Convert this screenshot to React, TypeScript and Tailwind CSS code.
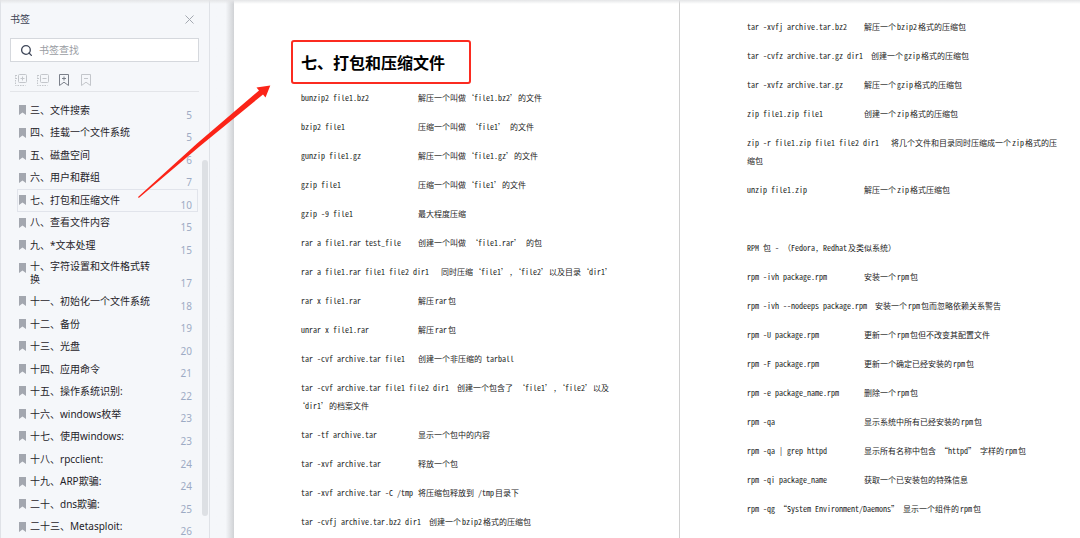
import { Search, X } from "lucide-react";

type Bookmark = { title: string; page: number; active?: boolean };

const bookmarks: Bookmark[] = [
  { title: "三、文件搜索", page: 5 },
  { title: "四、挂载一个文件系统", page: 5 },
  { title: "五、磁盘空间", page: 6 },
  { title: "六、用户和群组", page: 7 },
  { title: "七、打包和压缩文件", page: 10, active: true },
  { title: "八、查看文件内容", page: 15 },
  { title: "九、*文本处理", page: 15 },
  { title: "十、字符设置和文件格式转换", page: 17 },
  { title: "十一、初始化一个文件系统", page: 18 },
  { title: "十二、备份", page: 19 },
  { title: "十三、光盘", page: 20 },
  { title: "十四、应用命令", page: 21 },
  { title: "十五、操作系统识别:", page: 22 },
  { title: "十六、windows枚举", page: 23 },
  { title: "十七、使用windows:", page: 23 },
  { title: "十八、rpcclient:", page: 24 },
  { title: "十九、ARP欺骗:", page: 24 },
  { title: "二十、dns欺骗:", page: 25 },
  { title: "二十三、Metasploit:", page: 26 },
];

// [command, description]
const leftPage: [string, string][] = [
  ["bunzip2 file1.bz2", "解压一个叫做‘file1.bz2’的文件"],
  ["bzip2 file1", "压缩一个叫做 ‘file1’ 的文件"],
  ["gunzip file1.gz", "解压一个叫做‘file1.gz’的文件"],
  ["gzip file1", "压缩一个叫做‘file1’的文件"],
  ["gzip -9 file1", "最大程度压缩"],
  ["rar a file1.rar test_file", "创建一个叫做 ‘file1.rar’ 的包"],
  ["rar a file1.rar file1 file2 dir1   ", "同时压缩‘file1’,‘file2’以及目录‘dir1’"],
  ["rar x file1.rar", "解压rar包"],
  ["unrar x file1.rar", "解压rar包"],
  ["tar -cvf archive.tar file1", "创建一个非压缩的 tarball"],
  ["tar -cvf archive.tar file1 file2 dir1  ", "创建一个包含了 ‘file1’,‘file2’以及\n‘dir1’的档案文件"],
  ["tar -tf archive.tar", "显示一个包中的内容"],
  ["tar -xvf archive.tar", "释放一个包"],
  ["tar -xvf archive.tar -C /tmp", "将压缩包释放到 /tmp目录下"],
  ["tar -cvfj archive.tar.bz2 dir1  ", "创建一个bzip2格式的压缩包"],
];

const rightPage: [string, string][] = [
  ["tar -xvfj archive.tar.bz2", "解压一个bzip2格式的压缩包"],
  ["tar -cvfz archive.tar.gz dir1  ", "创建一个gzip格式的压缩包"],
  ["tar -xvfz archive.tar.gz", "解压一个gzip格式的压缩包"],
  ["zip file1.zip file1", "创建一个zip格式的压缩包"],
  ["zip -r file1.zip file1 file2 dir1   ", "将几个文件和目录同时压缩成一个zip格式的压\n缩包"],
  ["unzip file1.zip", "解压一个zip格式压缩包"],
  ["", ""],
  ["RPM 包 - （Fedora, Redhat及类似系统）", ""],
  ["rpm -ivh package.rpm", "安装一个rpm包"],
  ["rpm -ivh --nodeeps package.rpm  ", "安装一个rpm包而忽略依赖关系警告"],
  ["rpm -U package.rpm", "更新一个rpm包但不改变其配置文件"],
  ["rpm -F package.rpm", "更新一个确定已经安装的rpm包"],
  ["rpm -e package_name.rpm", "删除一个rpm包"],
  ["rpm -qa", "显示系统中所有已经安装的rpm包"],
  ["rpm -qa | grep httpd", "显示所有名称中包含 “httpd” 字样的rpm包"],
  ["rpm -qi package_name", "获取一个已安装包的特殊信息"],
  ["rpm -qg “System Environment/Daemons” ", "显示一个组件的rpm包"],
];

const Commands = ({ rows }: { rows: [string, string][] }) => (
  <div className="flex flex-col gap-[11px] whitespace-pre font-['Noto_Sans_Mono_CJK_SC','Liberation_Mono','Noto_Sans_CJK_SC',monospace] text-[8px] leading-[18px] font-medium text-[#1c1c1c] [text-autospace:normal] [text-spacing-trim:trim-start]">
    {rows.map(([command, description], i) => (
      <p key={i} className="min-h-[18px]">
        <span className="inline-block min-w-[117px]">{command}</span>
        {description}
      </p>
    ))}
  </div>
);

const ExpandIcon = ({ minus }: { minus?: boolean }) => (
  <svg viewBox="0 0 12 12" className="h-3 w-3" fill="none" stroke="currentColor">
    <rect x="3.5" y="0.5" width="8" height="8" rx="1" />
    <path d="M5.5 4.5h4" />
    {!minus && <path d="M7.5 2.5v4" />}
    <path d="M0.5 1v10.500h10" strokeDasharray="1.5 1" />
    <path d="M1 1.500h2M1 4.500h2" strokeDasharray="1 1" />
  </svg>
);

const MarkIcon = ({ minus }: { minus?: boolean }) => (
  <svg viewBox="0 0 10 12" className="h-3 w-[10px]" fill="none" stroke="currentColor">
    <path d="M0.5 0.5h9v11L5 8.2 0.5 11.5z" strokeLinejoin="round" />
    <path d="M3 4.5h4" />
    {!minus && <path d="M5 2.5v4" />}
  </svg>
);

const Sidebar = () => (
  <aside className="relative flex w-[210px] shrink-0 flex-col border-x border-[#dfe2e7] bg-[#f5f7fa]">
    <div className="flex h-[38px] shrink-0 items-center justify-between pr-[12px] pl-[9px]">
      <h2 className="text-[10px] text-[#3c4354]">书签</h2>
      <button aria-label="关闭" className="text-[#a4a9b1]">
        <X size={15} strokeWidth={1.6} />
      </button>
    </div>
    <label className="mr-[10px] ml-[9px] flex h-6 shrink-0 items-center gap-[6px] border border-[#d5d8dd] bg-white px-[9px]">
      <Search size={13} strokeWidth={2.4} className="shrink-0 text-[#3f4759]" />
      <input
        type="text"
        aria-label="书签查找"
        placeholder="书签查找"
        className="w-full min-w-0 text-[10px] outline-none placeholder:text-[#9a9da3]"
      />
    </label>
    <div className="mr-[10px] ml-[9px] flex h-[30px] shrink-0 items-center gap-[10px] border-b border-[#e3e5e9] pt-[6px] pl-[5px] text-[#c3c6cb]">
      <button aria-label="全部展开"><ExpandIcon /></button>
      <button aria-label="全部折叠"><ExpandIcon minus /></button>
      <button aria-label="添加书签" className="text-[#7b808a]"><MarkIcon /></button>
      <button aria-label="删除书签" className="ml-[2px]"><MarkIcon minus /></button>
    </div>
    <ul className="mt-[7px] mr-[11px] ml-4 flex min-h-0 flex-1 flex-col">
      {bookmarks.map((item) => (
        <li key={item.title} className="flex min-h-[22px] grow">
          <a
            href="#"
            className={`flex w-full items-center border pr-[5px] pl-[1px] ${item.active ? "border-[#e1e4eb]" : "border-transparent"}`}
          >
            <svg viewBox="0 0 7 10" className="mt-[5px] h-[10px] w-[7px] shrink-0 self-start text-[#a3a7af]" fill="currentColor">
              <path d="M0 0h7v10L3.5 7.6 0 10z" />
            </svg>
            <span className="ml-[4px] w-[124px] text-[10px] leading-[13px] text-[#1f2329]">{item.title}</span>
            <span className="ml-auto self-end text-[10px] leading-[11px] text-[#9dabc4]">{item.page}</span>
          </a>
        </li>
      ))}
    </ul>
    <div className="absolute top-[160px] right-[1px] bottom-[22px] w-[6px] rounded-full bg-[#dde0e4]" />
  </aside>
);

export default function App() {
  return (
    <div lang="zh-CN" className="relative flex h-screen overflow-hidden bg-white font-['Noto_Sans','Noto_Sans_CJK_SC',sans-serif]">
      <Sidebar />
      <div className="w-6 shrink-0 bg-linear-to-r from-[#f5f7fa] from-65% to-[#d0d2d5]" />
      <main className="flex min-w-0 flex-1">
        <section className="w-[446px] shrink-0 border-r border-[#d0d0d0] pt-[40px] pl-[57px]">
          <h1 className="mb-[5px] flex h-[44px] w-[180px] items-center rounded-[3px] border-2 border-[#fb2b20] pl-[8px] font-['Noto_Sans_CJK_SC',sans-serif] text-[16px] font-bold text-black">
            七、打包和压缩文件
          </h1>
          <div className="pl-[10px]">
            <Commands rows={leftPage} />
          </div>
        </section>
        <section className="min-w-0 flex-1 pt-[18px] pl-[67px]">
          <Commands rows={rightPage} />
        </section>
      </main>
      <div className="absolute inset-x-0 top-0 h-1 bg-linear-to-b from-[#e4e5e7] to-transparent" />
      <svg viewBox="0 0 134 114" className="absolute top-[85px] left-[137px] h-[114px] w-[134px]" fill="#fb2418">
        <path d="M1 112 60 58.500 122 5.500 119.500 2.500 133.300 0.500 128.500 12.500 126 9.500 62.500 61.500 1.800 113z" />
      </svg>
    </div>
  );
}
